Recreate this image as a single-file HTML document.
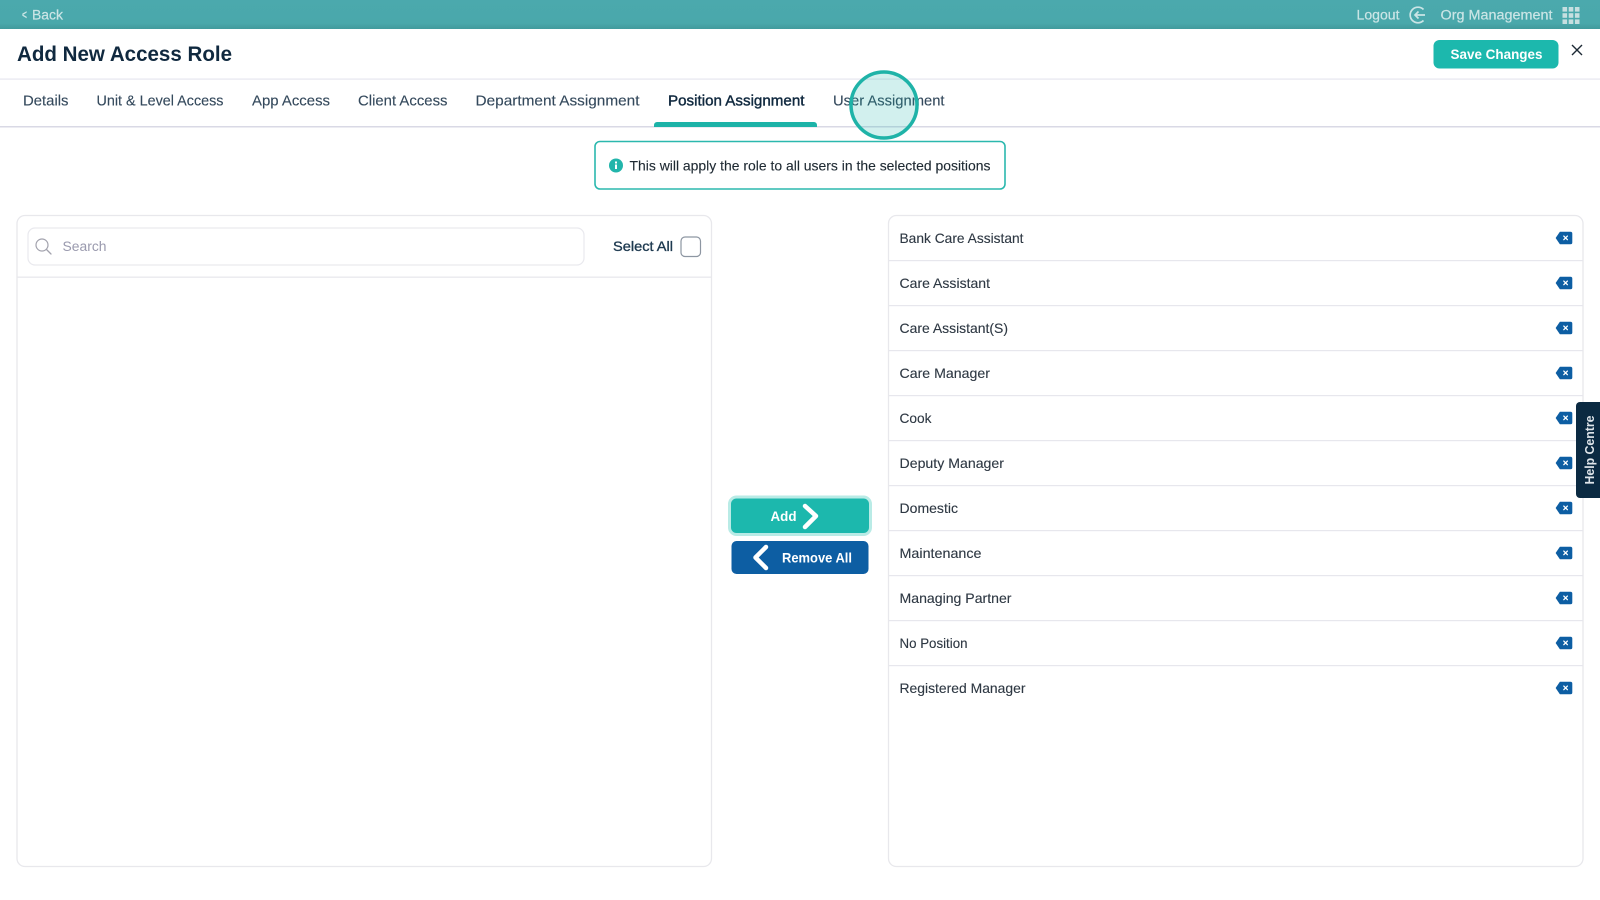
<!DOCTYPE html>
<html lang="en">
<head>
<meta charset="utf-8">
<title>Add New Access Role</title>
<style>
html,body{margin:0;padding:0;background:#fff;width:1600px;height:900px;overflow:hidden}
svg{display:block}
text{font-family:"Liberation Sans",Arial,sans-serif;}
.tab{font-size:14.5px;fill:#34495c;stroke:#34495c;stroke-width:.12}
.row{font-size:14px;fill:#2e3843;stroke:#2e3843;stroke-width:.12}
.top{font-size:13.5px;fill:#cbe5e6;stroke:#cbe5e6;stroke-width:.2}
</style>
</head>
<body>
<svg width="1600" height="900" viewBox="0 0 1600 900" xmlns="http://www.w3.org/2000/svg">
<defs>
<linearGradient id="bar" x1="0" y1="0" x2="0" y2="1">
<stop offset="0" stop-color="#4ba9ad"/><stop offset=".8" stop-color="#4aa8ab"/><stop offset="1" stop-color="#429a9c"/>
</linearGradient>
<g id="del">
<path d="M-3.800 -5.800H6.500a1.300 1.300 0 0 1 1.300 1.300V4.500a1.300 1.300 0 0 1-1.300 1.300H-3.800L-7.800 0Z" fill="#0d5ea3" stroke="#0d5ea3" stroke-width="1" stroke-linejoin="round"/>
<path d="M-.2 -1.900L3.400 1.700M3.400 -1.900L-.2 1.700" stroke="#fff" stroke-width="1.300" stroke-linecap="round" fill="none"/>
</g>
</defs>

<!-- top bar -->
<rect x="0" y="0" width="1600" height="29" fill="url(#bar)"/>
<text x="22" y="19" font-size="13" fill="#cbe5e6" font-weight="bold" textLength="5" lengthAdjust="spacingAndGlyphs">&lt;</text>
<text class="top" x="32" y="19.500" textLength="31" lengthAdjust="spacingAndGlyphs">Back</text>
<text class="top" x="1356.500" y="19.500" textLength="43" lengthAdjust="spacingAndGlyphs">Logout</text>
<path d="M1423.500 9.500A7.800 7.800 0 1 0 1423.500 20.500" fill="none" stroke="#cbe5e6" stroke-width="1.700"/>
<path d="M1425 15H1415M1418.500 11.500L1415 15L1418.500 18.500" fill="none" stroke="#cbe5e6" stroke-width="1.700"/>
<text class="top" x="1440.500" y="19.500" textLength="112" lengthAdjust="spacingAndGlyphs">Org Management</text>
<g fill="#c6dfe0">
<rect x="1562.500" y="7" width="4.600" height="4.600"/><rect x="1568.700" y="7" width="4.600" height="4.600"/><rect x="1574.900" y="7" width="4.600" height="4.600"/>
<rect x="1562.500" y="13.200" width="4.600" height="4.600"/><rect x="1568.700" y="13.200" width="4.600" height="4.600"/><rect x="1574.900" y="13.200" width="4.600" height="4.600"/>
<rect x="1562.500" y="19.400" width="4.600" height="4.600"/><rect x="1568.700" y="19.400" width="4.600" height="4.600"/><rect x="1574.900" y="19.400" width="4.600" height="4.600"/>
</g>

<!-- header -->
<text x="17" y="61" font-size="21" font-weight="bold" fill="#10293f" textLength="215" lengthAdjust="spacingAndGlyphs">Add New Access Role</text>
<rect x="1433.500" y="40" width="125" height="28.500" rx="6" fill="#1cb8ad"/>
<text x="1450.500" y="59" font-size="14" font-weight="bold" fill="#fff" textLength="92" lengthAdjust="spacingAndGlyphs">Save Changes</text>
<path d="M1572 45L1582 55M1582 45L1572 55" stroke="#1d2a35" stroke-width="1.400" fill="none"/>
<rect x="0" y="78.500" width="1600" height="1.200" fill="#e6e6ef"/>

<!-- tabs -->
<rect x="0" y="126" width="1600" height="1.500" fill="#d9d9e5"/>
<text class="tab" x="23" y="105.500" textLength="45.500" lengthAdjust="spacingAndGlyphs">Details</text>
<text class="tab" x="96.500" y="105.500" textLength="127" lengthAdjust="spacingAndGlyphs">Unit &amp; Level Access</text>
<text class="tab" x="252" y="105.500" textLength="78" lengthAdjust="spacingAndGlyphs">App Access</text>
<text class="tab" x="358" y="105.500" textLength="89.500" lengthAdjust="spacingAndGlyphs">Client Access</text>
<text class="tab" x="475.500" y="105.500" textLength="164" lengthAdjust="spacingAndGlyphs">Department Assignment</text>
<text x="668" y="105.500" font-size="14.500" fill="#10293f" stroke="#10293f" stroke-width=".4" textLength="136.500" lengthAdjust="spacingAndGlyphs">Position Assignment</text>
<text class="tab" x="833" y="105.500" textLength="111.500" lengthAdjust="spacingAndGlyphs">User Assignment</text>
<path d="M654 127V125a3 3 0 0 1 3-3H814a3 3 0 0 1 3 3V127Z" fill="#1cb3a8"/>

<!-- info box -->
<rect x="595" y="141.500" width="410" height="47.500" rx="5" fill="#fff" stroke="#2bb8ae" stroke-width="1.600"/>
<circle cx="616" cy="165.500" r="7" fill="#22b5ab"/>
<rect x="615" y="164.500" width="2" height="4.500" fill="#fff"/><rect x="615" y="161.500" width="2" height="2" fill="#fff"/>
<text x="629.500" y="170.500" font-size="13.800" fill="#1f2a33" stroke="#1f2a33" stroke-width=".12" textLength="361" lengthAdjust="spacingAndGlyphs">This will apply the role to all users in the selected positions</text>

<!-- circle highlight -->
<circle cx="884" cy="105" r="33" fill="#1cb3a8" fill-opacity=".2" stroke="#1fb3a8" stroke-width="3.500"/>

<!-- left panel -->
<rect x="17" y="215.500" width="694.500" height="651" rx="8" fill="#fff" stroke="#e8e8ec" stroke-width="1.300"/>
<rect x="28" y="228" width="556" height="37" rx="7" fill="#fff" stroke="#e9e9ee" stroke-width="1.200"/>
<circle cx="42" cy="245" r="6" fill="none" stroke="#a2a2ad" stroke-width="1.200"/>
<path d="M46.500 249.500L51 254" stroke="#a2a2ad" stroke-width="1.300" stroke-linecap="round"/>
<text x="62.500" y="251" font-size="13.500" fill="#9a9aae" textLength="44" lengthAdjust="spacingAndGlyphs">Search</text>
<text x="613" y="251" font-size="14" fill="#1e3a50" stroke="#1e3a50" stroke-width=".35" textLength="60" lengthAdjust="spacingAndGlyphs">Select All</text>
<rect x="681" y="237" width="19.500" height="19.500" rx="4" fill="#fff" stroke="#8d96a2" stroke-width="1.200"/>
<rect x="17.500" y="276.500" width="694" height="1.300" fill="#e8e8ec"/>

<!-- buttons -->
<rect x="729.500" y="497" width="141" height="37.500" rx="7" fill="#1cb8ad" stroke="#b9ebe6" stroke-width="3"/>
<text x="770.500" y="521" font-size="14" font-weight="bold" fill="#fff" textLength="26" lengthAdjust="spacingAndGlyphs">Add</text>
<path d="M805 506L816 516L805 527" fill="none" stroke="#fff" stroke-width="4.500" stroke-linecap="round" stroke-linejoin="round"/>
<rect x="731.500" y="541" width="137" height="33" rx="5" fill="#0d5ea3"/>
<path d="M766 547L755.500 557.500L766 568" fill="none" stroke="#fff" stroke-width="4.500" stroke-linecap="round" stroke-linejoin="round"/>
<text x="782" y="562.500" font-size="14" font-weight="bold" fill="#fff" textLength="70" lengthAdjust="spacingAndGlyphs">Remove All</text>

<!-- right panel -->
<rect x="888.500" y="215.500" width="694.500" height="651" rx="8" fill="#fff" stroke="#e8e8ec" stroke-width="1.300"/>
<g fill="#e7e7ed">
<rect x="889" y="260" width="694" height="1.200"/><rect x="889" y="305" width="694" height="1.200"/>
<rect x="889" y="350" width="694" height="1.200"/><rect x="889" y="395" width="694" height="1.200"/>
<rect x="889" y="440" width="694" height="1.200"/><rect x="889" y="485" width="694" height="1.200"/>
<rect x="889" y="530" width="694" height="1.200"/><rect x="889" y="575" width="694" height="1.200"/>
<rect x="889" y="620" width="694" height="1.200"/><rect x="889" y="665" width="694" height="1.200"/>
</g>
<text class="row" x="899.500" y="243" textLength="124" lengthAdjust="spacingAndGlyphs">Bank Care Assistant</text>
<text class="row" x="899.500" y="288" textLength="90.500" lengthAdjust="spacingAndGlyphs">Care Assistant</text>
<text class="row" x="899.500" y="333" textLength="108.500" lengthAdjust="spacingAndGlyphs">Care Assistant(S)</text>
<text class="row" x="899.500" y="378" textLength="90.500" lengthAdjust="spacingAndGlyphs">Care Manager</text>
<text class="row" x="899.500" y="423" textLength="32" lengthAdjust="spacingAndGlyphs">Cook</text>
<text class="row" x="899.500" y="468" textLength="104.500" lengthAdjust="spacingAndGlyphs">Deputy Manager</text>
<text class="row" x="899.500" y="513" textLength="58.500" lengthAdjust="spacingAndGlyphs">Domestic</text>
<text class="row" x="899.500" y="558" textLength="82" lengthAdjust="spacingAndGlyphs">Maintenance</text>
<text class="row" x="899.500" y="603" textLength="112" lengthAdjust="spacingAndGlyphs">Managing Partner</text>
<text class="row" x="899.500" y="648" textLength="68" lengthAdjust="spacingAndGlyphs">No Position</text>
<text class="row" x="899.500" y="693" textLength="126" lengthAdjust="spacingAndGlyphs">Registered Manager</text>
<use href="#del" x="1564" y="238"/><use href="#del" x="1564" y="283"/><use href="#del" x="1564" y="328"/>
<use href="#del" x="1564" y="373"/><use href="#del" x="1564" y="418"/><use href="#del" x="1564" y="463"/>
<use href="#del" x="1564" y="508"/><use href="#del" x="1564" y="553"/><use href="#del" x="1564" y="598"/>
<use href="#del" x="1564" y="643"/><use href="#del" x="1564" y="688"/>

<!-- help centre -->
<path d="M1600 402H1580a4 4 0 0 0-4 4V494a4 4 0 0 0 4 4H1600Z" fill="#0b2a42"/>
<text transform="translate(1594 484.500) rotate(-90)" x="0" y="0" font-size="13" font-weight="bold" fill="#dfe5ea" textLength="69" lengthAdjust="spacingAndGlyphs">Help Centre</text>
</svg>
</body>
</html>
